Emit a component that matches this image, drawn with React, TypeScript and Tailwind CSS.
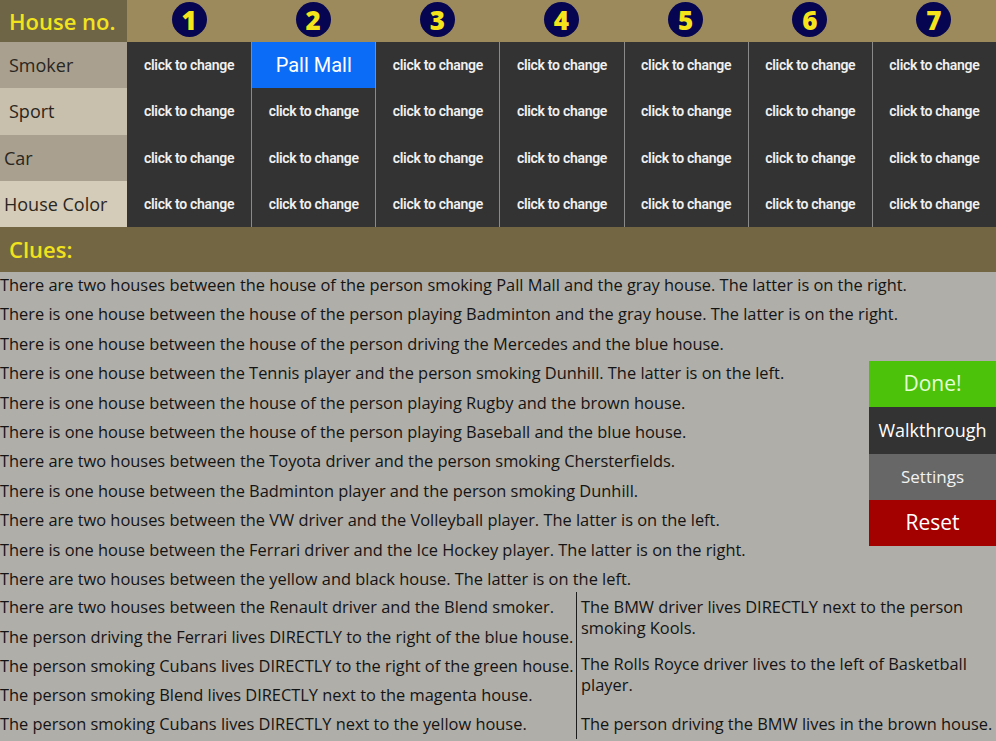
import React, { useState } from 'react'

const rows = ['Smoker', 'Sport', 'Car', 'House Color']
const labelBg = ['bg-[#a9a08f]', 'bg-[#c8bfac]', 'bg-[#a9a090]', 'bg-[#d5cbb9]']
const labelPad = ['pl-[9px]', 'pl-[9px]', 'pl-[4px]', 'pl-[4px]']

const clues = [
  'There are two houses between the house of the person smoking Pall Mall and the gray house. The latter is on the right.',
  'There is one house between the house of the person playing Badminton and the gray house. The latter is on the right.',
  'There is one house between the house of the person driving the Mercedes and the blue house.',
  'There is one house between the Tennis player and the person smoking Dunhill. The latter is on the left.',
  'There is one house between the house of the person playing Rugby and the brown house.',
  'There is one house between the house of the person playing Baseball and the blue house.',
  'There are two houses between the Toyota driver and the person smoking Chersterfields.',
  'There is one house between the Badminton player and the person smoking Dunhill.',
  'There are two houses between the VW driver and the Volleyball player. The latter is on the left.',
  'There is one house between the Ferrari driver and the Ice Hockey player. The latter is on the right.',
  'There are two houses between the yellow and black house. The latter is on the left.',
]

const nextTo = [
  'There are two houses between the Renault driver and the Blend smoker.',
  'The person driving the Ferrari lives DIRECTLY to the right of the blue house.',
  'The person smoking Cubans lives DIRECTLY to the right of the green house.',
  'The person smoking Blend lives DIRECTLY next to the magenta house.',
  'The person smoking Cubans lives DIRECTLY next to the yellow house.',
]

export default function App() {
  // picked values keyed by "row-col"
  const [picked] = useState<Record<string, string>>({ '0-1': 'Pall Mall' })

  return (
    <div className="w-[996px] h-[741px] overflow-hidden bg-[#b0aea8] text-[#141414] font-['Open_Sans',sans-serif]">
      <div className="grid grid-cols-[127px_repeat(7,1fr)] grid-rows-[42px_46px_47px_46px_46px]">
        <div className="flex items-center pl-[9px] bg-[#6e6446] text-[22px] font-semibold text-[#f2e41c]">House no.</div>
        {[1, 2, 3, 4, 5, 6, 7].map((n) => (
          <div key={n} className="flex items-start justify-center pt-[2px] bg-[#9c8a5d]">
            <span className="flex h-[35px] w-[35px] items-center justify-center rounded-full bg-[#050552] text-[26px] font-extrabold leading-none text-[#f5e41a]">
              {n}
            </span>
          </div>
        ))}
        {rows.map((r, ri) => (
          <React.Fragment key={r}>
            <div className={`flex items-center text-[18px] text-[#2a2620] ${labelPad[ri]} ${labelBg[ri]}`}>{r}</div>
            {[0, 1, 2, 3, 4, 5, 6].map((c) => {
              const val = picked[`${ri}-${c}`]
              return (
                <div
                  key={c}
                  className={`flex items-center justify-center ${c > 0 ? 'border-l border-[#8a8a8a]' : ''} ${
                    val ? 'bg-[#0b6cf8] text-[20px] font-normal text-white' : 'bg-[#333333] text-[14px] font-semibold text-[#f0f0f0] tracking-[-0.3px]'
                  } font-['Roboto',sans-serif]`}
                >
                  {val ?? 'click to change'}
                </div>
              )
            })}
          </React.Fragment>
        ))}
      </div>

      <div className="flex h-[45px] items-center pl-[9px] bg-[#736743] text-[22px] font-semibold text-[#f0e21c]">Clues:</div>

      <div className="relative">
        <div className="-mt-[2px] text-[16.4px] font-medium leading-[29.4px]">
          {clues.map((c) => (
            <div key={c} className="whitespace-nowrap">{c}</div>
          ))}
        </div>

        <div className="-mt-[1px] grid grid-cols-[577px_1fr] text-[16.4px] font-medium">
          <div className="border-r border-[#1c1c1c] leading-[29.25px]">
            {nextTo.map((c) => (
              <div key={c} className="whitespace-nowrap">{c}</div>
            ))}
          </div>
          <div className="flex flex-col pl-[4px] leading-[21px]">
            <div className="h-[58.5px] pt-[4px]">The BMW driver lives DIRECTLY next to the person smoking Kools.</div>
            <div className="h-[58.5px] pt-[2px]">The Rolls Royce driver lives to the left of Basketball player.</div>
            <div className="pt-[4px] whitespace-nowrap">The person driving the BMW lives in the brown house.</div>
          </div>
        </div>

        <div className="absolute right-0 top-[91px] flex w-[127px] flex-col">
          <button className="h-[46px] bg-[#4dc20b] text-[21px] font-medium text-[#e4ffd8]">Done!</button>
          <button className="h-[47px] bg-[#333333] text-[18px] font-medium text-white">Walkthrough</button>
          <button className="h-[46px] bg-[#676767] text-[17px] font-medium text-[#f2f2f2]">Settings</button>
          <button className="h-[46px] bg-[#a30000] text-[21px] font-medium text-white">Reset</button>
        </div>
      </div>
    </div>
  )
}
